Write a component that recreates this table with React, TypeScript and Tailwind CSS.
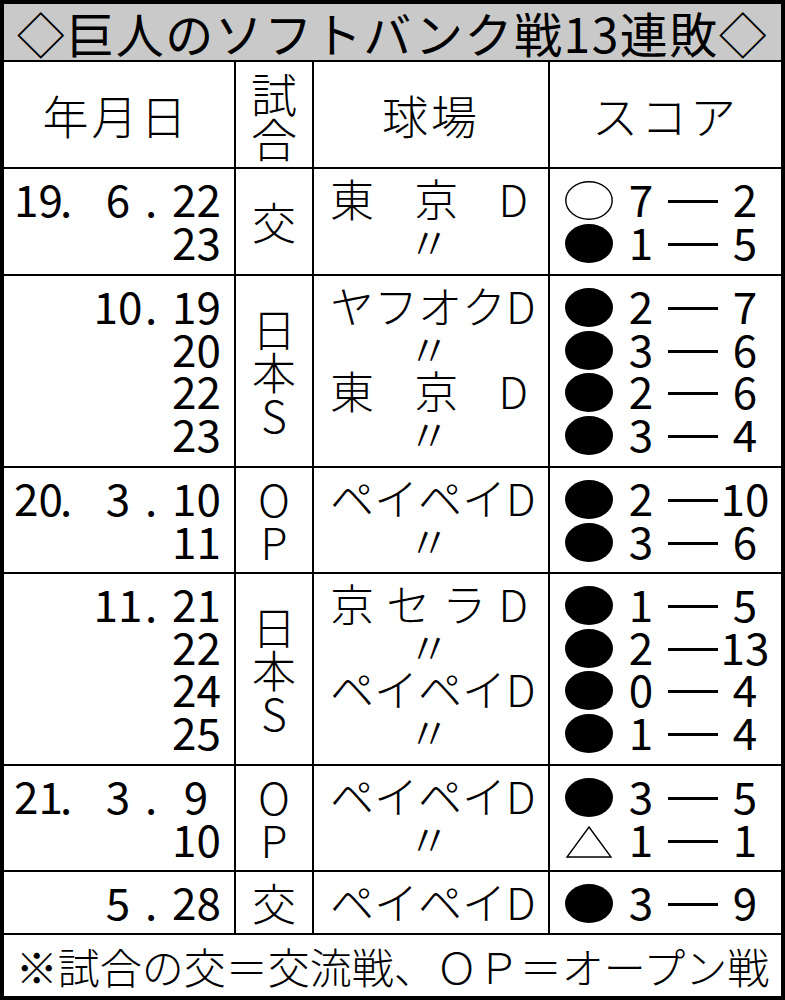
import React from "react";

type Mark = "W" | "L" | "D";
type DateLine = { y?: string; m?: string; d: string };
type Group = {
  h: string;
  dates: DateLine[];
  type: string[];
  venues: string[];
  scores: [Mark, string, string][];
};

const groups: Group[] = [
  {
    h: "h-[107px]",
    dates: [{ y: "19", m: "6", d: "22" }, { d: "23" }],
    type: ["交"],
    venues: ["東京D", "〃"],
    scores: [
      ["W", "7", "2"],
      ["L", "1", "5"],
    ],
  },
  {
    h: "h-[192px]",
    dates: [{ m: "10", d: "19" }, { d: "20" }, { d: "22" }, { d: "23" }],
    type: ["日", "本", "S"],
    venues: ["ヤフオクD", "〃", "東京D", "〃"],
    scores: [
      ["L", "2", "7"],
      ["L", "3", "6"],
      ["L", "2", "6"],
      ["L", "3", "4"],
    ],
  },
  {
    h: "h-[106px]",
    dates: [{ y: "20", m: "3", d: "10" }, { d: "11" }],
    type: ["O", "P"],
    venues: ["ペイペイD", "〃"],
    scores: [
      ["L", "2", "10"],
      ["L", "3", "6"],
    ],
  },
  {
    h: "h-[192px]",
    dates: [{ m: "11", d: "21" }, { d: "22" }, { d: "24" }, { d: "25" }],
    type: ["日", "本", "S"],
    venues: ["京セラD", "〃", "ペイペイD", "〃"],
    scores: [
      ["L", "1", "5"],
      ["L", "2", "13"],
      ["L", "0", "4"],
      ["L", "1", "4"],
    ],
  },
  {
    h: "h-[106px]",
    dates: [{ y: "21", m: "3", d: "9" }, { d: "10" }],
    type: ["O", "P"],
    venues: ["ペイペイD", "〃"],
    scores: [
      ["L", "3", "5"],
      ["D", "1", "1"],
    ],
  },
  {
    h: "h-[63px]",
    dates: [{ m: "5", d: "28" }],
    type: ["交"],
    venues: ["ペイペイD"],
    scores: [["L", "3", "9"]],
  },
];

function MarkIcon({ mark }: { mark: Mark }) {
  if (mark === "D") {
    return (
      <svg width="48" height="32" viewBox="0 0 48 32" className="mt-[9px] shrink-0">
        <polygon points="24,1 46,31 2,31" fill="white" stroke="black" strokeWidth="1.4" />
      </svg>
    );
  }
  return (
    <svg width="48" height="39" viewBox="0 0 48 39" className="mt-[4px] shrink-0">
      {mark === "L" ? (
        <ellipse cx="24" cy="19.5" rx="24" ry="19.5" fill="black" />
      ) : (
        <ellipse cx="24" cy="19.5" rx="23.2" ry="18.8" fill="white" stroke="black" strokeWidth="1.4" />
      )}
    </svg>
  );
}

function DateRow({ line }: { line: DateLine }) {
  return (
    <div className="flex justify-end pr-[14px] h-[42.5px] leading-[42.5px] font-normal">
      <span className="w-[46px] text-right">{line.y ?? ""}</span>
      <span className="w-[12px]">{line.y ? "." : ""}</span>
      <span className="w-[21px]" />
      <span className="w-[50px] text-center">{line.m ?? ""}</span>
      <span className="w-[16px] pl-[2px]">{line.m ? "." : ""}</span>
      <span className="w-[13px]" />
      <span className="w-[48px] text-center">{line.d}</span>
    </div>
  );
}

function splitVenue(v: string): string[] {
  if (v === "東京D") return ["東", "京", "D"];
  return Array.from(v);
}

function VenueRow({ v }: { v: string }) {
  if (v === "〃") {
    return <div className="h-[42.5px] leading-[42.5px] w-[198px] text-center">〃</div>;
  }
  return (
    <div className="h-[42.5px] leading-[42.5px] w-[198px] flex justify-between">
      {splitVenue(v).map((c, i) => (
        <span key={i}>{c}</span>
      ))}
    </div>
  );
}

function ScoreRow({ s }: { s: [Mark, string, string] }) {
  return (
    <div className="flex items-start h-[42.5px] leading-[42.5px] pl-[15px] font-normal">
      <MarkIcon mark={s[0]} />
      <span className="w-[34px] ml-[11px] text-center">{s[1]}</span>
      <span className="w-[50px] h-[3px] bg-black ml-[10px] mt-[23px]" />
      <span className="w-[50px] ml-[2px] text-center">{s[2]}</span>
    </div>
  );
}

export default function App() {
  return (
    <div className="w-[785px] h-[1000px] bg-white text-black border-4 border-black font-['Noto_Sans_CJK_JP','Noto_Sans',sans-serif] font-light overflow-hidden">
      <div className="h-[58px] bg-[#c9c9c9] border-b-2 border-black flex items-center justify-center text-[48px] leading-[56px] tracking-[1.5px] font-normal whitespace-nowrap">
        ◇巨人のソフトバンク戦13連敗◇
      </div>

      <div className="grid grid-cols-[232px_78px_236px_231px] h-[107px] border-b-2 border-black text-[46px]">
        <div className="border-r-2 border-black flex items-center justify-center tracking-[3px] pr-[6px]">年月日</div>
        <div className="border-r-2 border-black flex flex-col items-center justify-center leading-[45px]">
          <span>試</span>
          <span>合</span>
        </div>
        <div className="border-r-2 border-black flex items-center justify-center tracking-[3px]">球場</div>
        <div className="flex items-center justify-center tracking-[3px]">スコア</div>
      </div>

      {groups.map((g, gi) => (
        <div
          key={gi}
          className={`grid grid-cols-[232px_78px_236px_231px] ${g.h} border-b-2 border-black text-[44px]`}
        >
          <div className="border-r-2 border-black pt-[8px]">
            {g.dates.map((d, i) => (
              <DateRow key={i} line={d} />
            ))}
          </div>
          <div className="border-r-2 border-black flex flex-col items-center justify-center leading-[43px]">
            {g.type.map((t, i) => (
              <span key={i}>{t}</span>
            ))}
          </div>
          <div className="border-r-2 border-black pt-[8px] pl-[16px]">
            {g.venues.map((v, i) => (
              <VenueRow key={i} v={v} />
            ))}
          </div>
          <div className="pt-[8px]">
            {g.scores.map((s, i) => (
              <ScoreRow key={i} s={s} />
            ))}
          </div>
        </div>
      ))}

      <div className="h-[61px] flex items-center justify-center text-[42px] leading-none">
        ※試合の交＝交流戦、ＯＰ＝オープン戦
      </div>
    </div>
  );
}
